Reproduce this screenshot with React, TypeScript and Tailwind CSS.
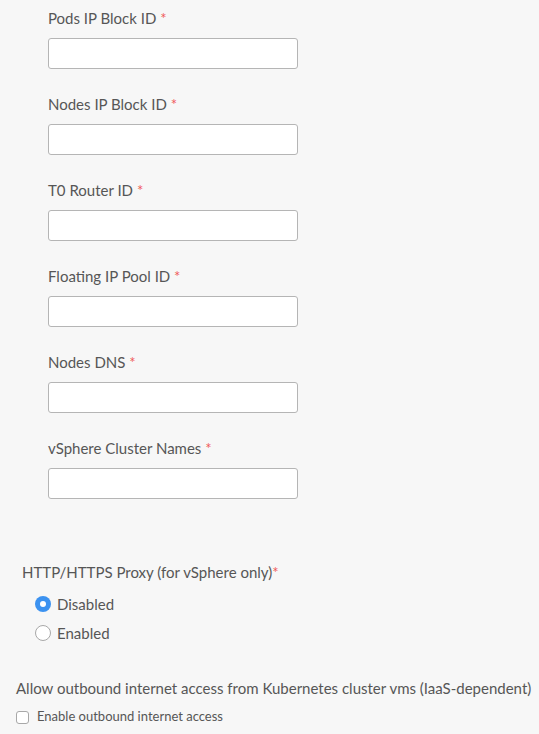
import React from 'react';

const fields = [
  'Pods IP Block ID',
  'Nodes IP Block ID',
  'T0 Router ID',
  'Floating IP Pool ID',
  'Nodes DNS',
  'vSphere Cluster Names',
];

export default function App() {
  return (
    <div className="min-h-[734px] w-[539px] bg-[#f7f7f7] text-[#565656] font-['Lato',sans-serif] overflow-hidden">
      {/* Text fields */}
      <div className="pl-[48px] pt-[8px]">
        {fields.map((f) => (
          <div key={f} className="mb-[25px]">
            <label className="block h-[20px] text-[15px] leading-[20px]">
              {f} <span className="text-[#f05a5a]">*</span>
            </label>
            <input
              type="text"
              className="mt-[10px] block h-[31px] w-[250px] rounded-[3px] border border-[#b5b5b5] bg-white outline-none"
            />
          </div>
        ))}
      </div>

      {/* Proxy */}
      <div className="pl-[22px] pt-[38px]">
        <div className="h-[20px] text-[15px] leading-[20px]">
          HTTP/HTTPS Proxy (for vSphere only)<span className="text-[#f05a5a]">*</span>
        </div>
        <div className="mt-[12px] pl-[13px] flex flex-col gap-[9px]">
          <label className="flex items-center gap-[6px] h-[20px] text-[15px]">
            <span className="w-[16px] h-[16px] rounded-full bg-[#3c92f0] flex items-center justify-center">
              <span className="w-[6px] h-[6px] rounded-full bg-white" />
            </span>
            Disabled
          </label>
          <label className="flex items-center gap-[6px] h-[20px] text-[15px]">
            <span className="w-[16px] h-[16px] rounded-full border border-[#a8a8a8] bg-white" />
            Enabled
          </label>
        </div>
      </div>

      {/* Outbound */}
      <div className="pl-[16px] pt-[35px]">
        <div className="h-[20px] text-[15px] leading-[20px] whitespace-nowrap">
          Allow outbound internet access from Kubernetes cluster vms (IaaS-dependent)
        </div>
        <label className="mt-[11px] flex items-center gap-[8px] h-[16px] text-[13px]">
          <span className="w-[13px] h-[13px] rounded-[3px] border border-[#a8a8a8] bg-white" />
          Enable outbound internet access
        </label>
      </div>
    </div>
  );
}
